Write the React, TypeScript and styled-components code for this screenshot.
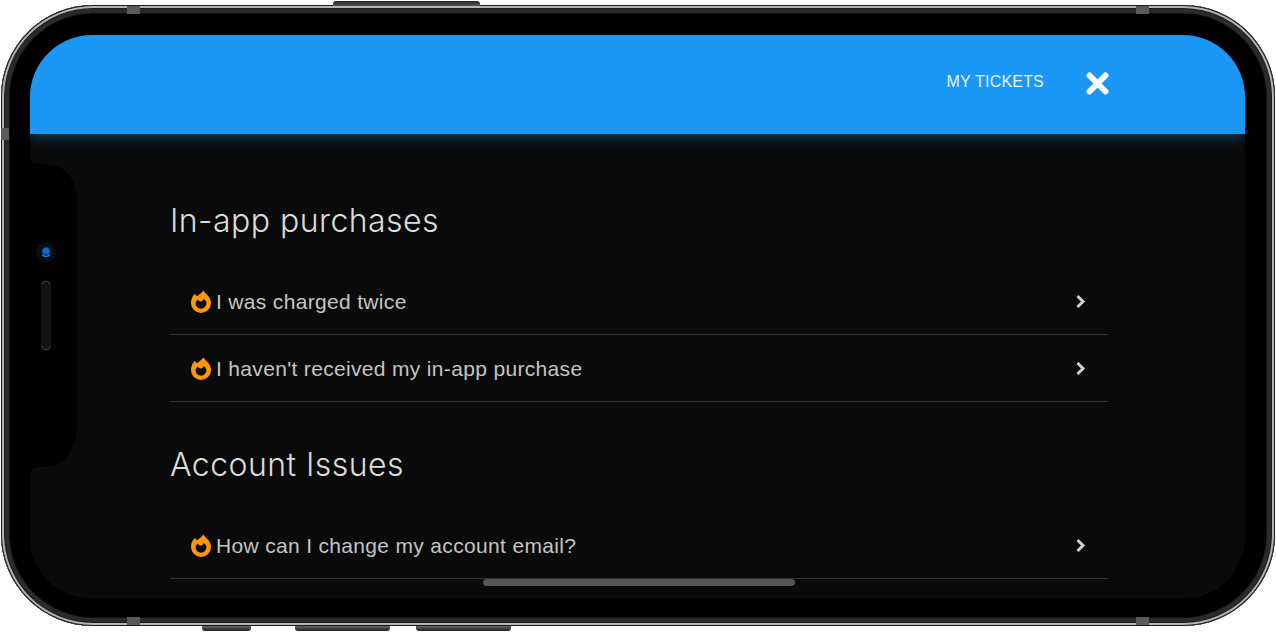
import React from "react";
import styled, { createGlobalStyle } from "styled-components";

const Global = createGlobalStyle`
  html, body { margin: 0; padding: 0; background: #fff; overflow: hidden; }
  #root { height: 632px; }
  * { box-sizing: border-box; }
`;

const Device = styled.div`
  position: relative;
  width: 1276px;
  height: 632px;
  padding: 5px 1px 6px;
`;

const Frame = styled.div`
  position: relative;
  height: 100%;
  padding: 30px 30px 28px 29px;
  background: #000;
  border-radius: 92px;
  box-shadow:
    inset 0 0 0 1px #1a1a1a,
    inset 0 0 0 3px #b4b4b4,
    inset 0 0 0 4px #1c1c1c,
    inset 0 0 0 8px #2b2b2b,
    inset 0 0 0 9px #111;
`;

const SideButton = styled.div<{ $left: number; $width: number; $top?: boolean }>`
  position: absolute;
  left: ${(p) => p.$left}px;
  width: ${(p) => p.$width}px;
  height: 5px;
  ${(p) => (p.$top ? "top: 1px;" : "bottom: 1px;")}
  background: linear-gradient(${(p) => (p.$top ? "180deg, #222, #555" : "0deg, #222, #666")});
  border-radius: ${(p) => (p.$top ? "3px 3px 0 0" : "0 0 3px 3px")};
`;

const Band = styled.div<{ $x?: number; $y?: number; $bottom?: boolean; $vertical?: boolean }>`
  position: absolute;
  background: #5a5a5a;
  ${(p) =>
    p.$vertical
      ? `left: 1px; top: ${p.$y}px; width: 8px; height: 12px;`
      : `left: ${p.$x}px; ${p.$bottom ? "bottom: 7px;" : "top: 6px;"} width: 13px; height: 8px;`}
`;

const Screen = styled.div`
  position: relative;
  height: 100%;
  background: #0a0a0a;
  border-radius: 62px 62px 60px 60px;
  overflow: hidden;
  font-family: "Liberation Sans", Arial, sans-serif;
`;

const Header = styled.header`
  display: flex;
  justify-content: flex-end;
  align-items: flex-start;
  gap: 41px;
  height: 99px;
  padding: 36px 135px 0 0;
  background: #1b98f5;
  box-shadow: 0 2px 14px rgba(27, 152, 245, 0.45);
`;

const TicketsLink = styled.span`
  margin-top: 1px;
  font-size: 16px;
  line-height: 20px;
  letter-spacing: 0.2px;
  color: #e6f3fe;
`;

const CloseButton = styled.span`
  display: block;
  width: 25px;
  height: 25px;
`;

const Content = styled.main`
  padding: 0 137px 0 140px;
`;

const Section = styled.section<{ $first?: boolean }>`
  padding-top: ${(p) => (p.$first ? 65 : 41)}px;
`;

const SectionTitle = styled.h2`
  margin: 0 0 25px;
  font-family: Inter, "Liberation Sans", sans-serif;
  font-size: 32px;
  line-height: 44px;
  font-weight: 300;
  letter-spacing: 0.45px;
  color: #dcdcdc;
`;

const Row = styled.div`
  display: flex;
  align-items: center;
  gap: 5px;
  height: 67px;
  padding: 0 22px 0 21px;
  border-bottom: 1px solid #2f2f2f;
`;

const RowLabel = styled.span`
  flex: 1;
  margin-top: 2px;
  font-size: 21px;
  line-height: 24px;
  letter-spacing: 0.33px;
  color: #c4c4c4;
`;

const FlameBox = styled.svg`
  flex: none;
  width: 20px;
  height: 23px;
`;

const ChevronBox = styled.svg`
  flex: none;
  width: 11px;
  height: 15px;
  margin-top: 1px;
`;

const Notch = styled.svg`
  position: absolute;
  left: 0;
  top: 121px;
  width: 47px;
  height: 322px;
`;

const HomeBar = styled.div`
  position: absolute;
  left: 453px;
  bottom: 12px;
  width: 312px;
  height: 7px;
  border-radius: 4px;
  background: #565656;
`;

const Flame = () => (
  <FlameBox viewBox="0 0 20 23">
    <path
      fill="#ff9800"
      fillRule="evenodd"
      d="M12.500 .5C13.500 2.500 15 3.500 16.500 5.200 18.800 7.500 20 10 20 13A10 10 0 0 1 0 13C0 9.500 1.200 6.500 4 3.800 4.600 5 5.200 5.800 6.200 6.200 8 4.800 10.500 3 12.500 .5ZM6.900 9.500C5.500 10.500 4.700 11.800 4.600 13.300 4.400 16.400 7 18.700 10 18.700 13 18.700 15.400 16.300 15.400 13.300 15.400 11.500 14.300 10 12.400 9 12 10.200 11.300 11.400 10 11.400 8.400 11.400 7.300 10.700 6.900 9.500Z"
    />
  </FlameBox>
);

const Chevron = () => (
  <ChevronBox viewBox="0 0 11 15">
    <path d="M2.500 2l5.500 5.500L2.500 13" fill="none" stroke="#d0d0d0" strokeWidth="3" />
  </ChevronBox>
);

const rows1 = ["I was charged twice", "I haven't received my in-app purchase"];
const rows2 = ["How can I change my account email?"];

const Item = ({ label }: { label: string }) => (
  <Row>
    <Flame />
    <RowLabel>{label}</RowLabel>
    <Chevron />
  </Row>
);

export default function App() {
  return (
    <Device>
      <Global />
      <Frame>
        <Screen>
          <Header>
            <TicketsLink>MY TICKETS</TicketsLink>
            <CloseButton>
              <svg width="25" height="25" viewBox="0 0 25 25">
                <path d="M4.500 4.500l16 16M20.500 4.500l-16 16" stroke="#fff" strokeWidth="6" strokeLinecap="round" />
              </svg>
            </CloseButton>
          </Header>
          <Content>
            <Section $first>
              <SectionTitle>In-app purchases</SectionTitle>
              {rows1.map((r) => (
                <Item key={r} label={r} />
              ))}
            </Section>
            <Section>
              <SectionTitle>Account Issues</SectionTitle>
              {rows2.map((r) => (
                <Item key={r} label={r} />
              ))}
            </Section>
          </Content>
          <Notch viewBox="0 0 47 322">
            <path d="M0 0C0 5 3 8 10 8H14C34 8 47 22 47 44V270C47 294 34 311 14 311H10C3 311 0 314 0 322Z" fill="#000" />
            <circle cx="16" cy="96" r="10" fill="#0a0d10" />
            <circle cx="16" cy="96" r="5" fill="#04274f" />
            <circle cx="16" cy="95" r="3.500" fill="#0a6cd0" />
            <path d="M12.300 98.800a5 5 0 0 0 7.400 0" stroke="#1088e8" strokeWidth="1.300" fill="none" />
            <rect x="11" y="125" width="10" height="69" rx="5" fill="#131313" />
            <path d="M12 129a4 4 0 0 1 8 0M12 190a4 4 0 0 0 8 0" stroke="#4a4a4a" strokeWidth="0.800" fill="none" />
          </Notch>
          <HomeBar />
        </Screen>
      </Frame>
      <SideButton $top $left={333} $width={147} />
      <SideButton $left={202} $width={49} />
      <SideButton $left={295} $width={95} />
      <SideButton $left={416} $width={95} />
      <Band $x={127} />
      <Band $x={1136} />
      <Band $x={127} $bottom />
      <Band $x={1136} $bottom />
      <Band $vertical $y={128} />
    </Device>
  );
}
